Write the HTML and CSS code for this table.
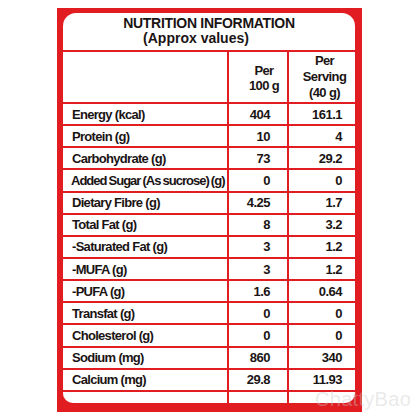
FILE: index.html
```html
<!DOCTYPE html>
<html lang="en">
<head>
<meta charset="utf-8">
<title>Nutrition Information</title>
<link rel="stylesheet" href="styles.css">
</head>
<body>
<div class="page">
  <div class="label">
    <div class="inner">
      <div class="title">
        <div class="title-main">NUTRITION INFORMATION</div>
        <div class="title-sub">(Approx values)</div>
      </div>
      <div class="grid">
        <div class="cell"></div>
        <div class="cell colhead c2">Per<br>100 g</div>
        <div class="cell colhead c3">Per<br>Serving<br>(40 g)</div>

        <div class="cell name">Energy (kcal)</div><div class="cell num c2">404</div><div class="cell num c3">161.1</div>
        <div class="cell name">Protein (g)</div><div class="cell num c2">10</div><div class="cell num c3">4</div>
        <div class="cell name">Carbohydrate (g)</div><div class="cell num c2">73</div><div class="cell num c3">29.2</div>
        <div class="cell name long">Added Sugar (As sucrose) (g)</div><div class="cell num c2">0</div><div class="cell num c3">0</div>
        <div class="cell name">Dietary Fibre (g)</div><div class="cell num c2">4.25</div><div class="cell num c3">1.7</div>
        <div class="cell name">Total Fat (g)</div><div class="cell num c2">8</div><div class="cell num c3">3.2</div>
        <div class="cell name">-Saturated Fat (g)</div><div class="cell num c2">3</div><div class="cell num c3">1.2</div>
        <div class="cell name">-MUFA (g)</div><div class="cell num c2">3</div><div class="cell num c3">1.2</div>
        <div class="cell name">-PUFA (g)</div><div class="cell num c2">1.6</div><div class="cell num c3">0.64</div>
        <div class="cell name">Transfat (g)</div><div class="cell num c2">0</div><div class="cell num c3">0</div>
        <div class="cell name">Cholesterol (g)</div><div class="cell num c2">0</div><div class="cell num c3">0</div>
        <div class="cell name">Sodium (mg)</div><div class="cell num c2">860</div><div class="cell num c3">340</div>
        <div class="cell name">Calcium (mg)</div><div class="cell num c2">29.8</div><div class="cell num c3">11.93</div>

        <div class="cell"></div><div class="cell"></div><div class="cell"></div>
      </div>
    </div>
  </div>
  <div class="watermark">ChattyBao</div>
</div>
</body>
</html>
```

FILE: styles.css
```css
html, body {
  margin: 0;
  padding: 0;
  background: #ffffff;
}

.page {
  position: relative;
  width: 420px;
  height: 420px;
  padding-top: 8px;
  box-sizing: border-box;
  font-family: "Liberation Sans", Arial, sans-serif;
  font-weight: bold;
  color: #1b1414;
}

.label {
  margin-left: 57px;
  width: 305px;
  box-sizing: border-box;
  padding: 5px 7px 9px 6px;
  background: #e21d22;
}

.inner {
  background: #ffffff;
  border-radius: 13px 13px 10px 10px;
  overflow: hidden;
}

.title {
  height: 37px;
  box-sizing: border-box;
  padding-top: 3px;
  text-align: center;
  font-size: 14px;
  line-height: 15px;
  letter-spacing: -0.3px;
}

.title-sub {
  padding-right: 26px;
  letter-spacing: 0;
}

.grid {
  display: grid;
  grid-template-columns: 164px 58px 66px;
  grid-template-rows: 50px repeat(13, 20.15px) 11px;
  gap: 2px;
  padding-top: 2px;
  background: #e21d22;
}

.cell {
  background: #ffffff;
  display: flex;
  align-items: center;
  font-size: 13px;
  line-height: 15px;
  letter-spacing: -0.7px;
  white-space: nowrap;
}

.name {
  padding-left: 9px;
}

.name.long {
  padding-left: 8px;
  letter-spacing: -1px;
  word-spacing: -0.5px;
}

.num {
  justify-content: flex-end;
  letter-spacing: -0.5px;
}

.num.c2 {
  padding-right: 17px;
}

.num.c3 {
  padding-right: 13px;
}

.colhead {
  justify-content: center;
  text-align: center;
  letter-spacing: -0.6px;
}

.colhead.c2 {
  padding-left: 12px;
  padding-top: 2px;
}

.colhead.c3 {
  padding-left: 5px;
  line-height: 16px;
}

.watermark {
  position: absolute;
  left: 315px;
  top: 388px;
  font-family: "Liberation Sans", Arial, sans-serif;
  font-weight: normal;
  font-size: 20px;
  line-height: normal;
  color: rgba(200, 200, 200, 0.4);
  letter-spacing: 0.3px;
}
```
